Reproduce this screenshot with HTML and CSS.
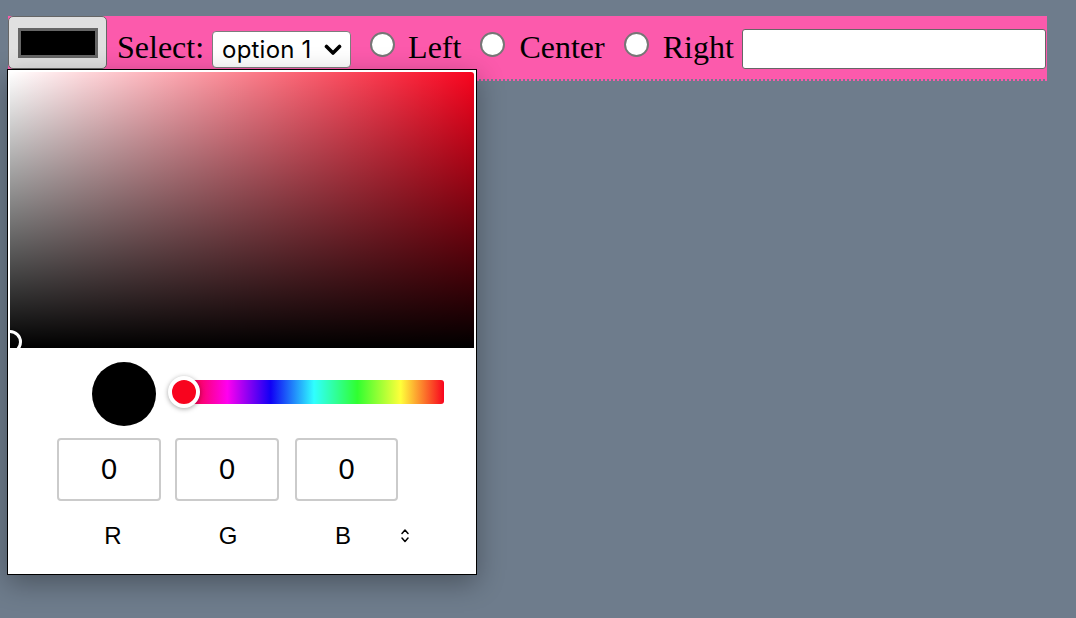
FILE: index.html
```html
<!DOCTYPE html>
<html lang="en">
<head>
<meta charset="utf-8">
<title>Toolbar with color picker</title>
<link rel="stylesheet" href="styles.css">
</head>
<body>
<div class="page">
  <form class="toolbar">
    <div class="color-field">
      <div class="color-btn"><span class="color-swatch"></span></div>
      <div class="picker">
        <div class="saturation">
          <span class="sat-pointer"></span>
        </div>
        <div class="picker-body">
          <div class="pk-row-top">
            <span class="pk-swatch"></span>
            <div class="hue">
              <span class="hue-thumb"></span>
            </div>
          </div>
          <div class="pk-fields">
            <div class="pk-field f-r">0</div>
            <div class="pk-field f-g">0</div>
            <div class="pk-field f-b">0</div>
          </div>
          <div class="pk-labels">
            <span class="pk-label l-r">R</span>
            <span class="pk-label l-g">G</span>
            <span class="pk-label l-b">B</span>
            <svg class="pk-toggle" width="8" height="16" viewBox="0 0 8 16">
              <path d="M1 5.5 L4 2 L7 5.5" fill="none" stroke="#000" stroke-width="1.5" stroke-linecap="round" stroke-linejoin="round"/>
              <path d="M1 10 L4 13.5 L7 10" fill="none" stroke="#000" stroke-width="1.5" stroke-linecap="round" stroke-linejoin="round"/>
            </svg>
          </div>
        </div>
      </div>
    </div>
    <span class="lbl lbl-select">Select:</span>
    <div class="select">
      <span class="select-text">option 1</span>
      <svg class="select-chev" width="18" height="12" viewBox="0 0 18 12">
        <path d="M2.5 2.5 L9 9 L15.5 2.5" fill="none" stroke="#000" stroke-width="3.6" stroke-linecap="round" stroke-linejoin="round"/>
      </svg>
    </div>
    <input type="radio" name="align" class="radio r-left">
    <span class="lbl lbl-left">Left</span>
    <input type="radio" name="align" class="radio r-center">
    <span class="lbl lbl-center">Center</span>
    <input type="radio" name="align" class="radio r-right">
    <span class="lbl lbl-right">Right</span>
    <input type="text" class="text-input">
  </form>
</div>
</body>
</html>
```

FILE: styles.css
```css
html, body {
  margin: 0;
  padding: 0;
  height: 100%;
  background: #6e7c8c;
}

.page {
  box-sizing: border-box;
  min-height: 100%;
  padding: 16px 8px 0 8px;
}

.toolbar {
  position: relative;
  display: flex;
  align-items: flex-start;
  width: fit-content;
  height: 63px;
  margin: 0;
  padding: 0 1px 0 0;
  background: #fc5aac;
  background-clip: padding-box;
  border-bottom: 2px dotted #fc5aac;
  font-family: "Liberation Serif", "Times New Roman", serif;
  overflow: visible;
}

/* color input */
.color-field {
  position: relative;
  margin-right: 10px;
  overflow: visible;
}

.color-btn {
  box-sizing: border-box;
  width: 99px;
  height: 53px;
  padding: 11px 9px;
  background: #e0e0e0;
  border: 1.5px solid #666;
  border-radius: 5px;
}

.color-swatch {
  display: block;
  box-sizing: border-box;
  width: 80px;
  height: 30px;
  background: #000;
  border: 3px solid #666;
}

/* labels */
.lbl {
  font-size: 32px;
  line-height: 36px;
  color: #000;
  margin-top: 13px;
  white-space: nowrap;
}

.lbl-select { margin-right: 8px; }
.lbl-left { margin-right: 19px; }
.lbl-center { margin-right: 19px; }
.lbl-right { margin-right: 8px; }

/* select */
.select {
  box-sizing: border-box;
  display: flex;
  align-items: center;
  width: 139px;
  height: 37px;
  margin-top: 15px;
  margin-right: 19px;
  padding: 0 0 0 9px;
  background: #fff;
  border: 1px solid #7d7d7d;
  border-radius: 4px;
}

.select-text {
  font-family: "Inter", "Liberation Sans", Arial, sans-serif;
  font-size: 24px;
  line-height: 30px;
  color: #000;
  letter-spacing: 0.2px;
}

.select-chev {
  margin-left: auto;
  margin-right: 8px;
}

/* radios */
.radio {
  appearance: none;
  -webkit-appearance: none;
  box-sizing: border-box;
  width: 25px;
  height: 25px;
  margin: 16px 13px 0 0;
  background: #fff;
  border: 2px solid #767676;
  border-radius: 50%;
}

.r-center, .r-right { margin-right: 14px; }

/* text input */
.text-input {
  box-sizing: border-box;
  width: 304px;
  height: 40px;
  margin: 13px 0 0 0;
  background: #fff;
  border: 1.5px solid #666;
  border-radius: 3px;
}

/* picker popover */
.picker {
  position: absolute;
  left: -1px;
  top: 53px;
  z-index: 5;
  box-sizing: border-box;
  width: 470px;
  height: 506px;
  background: #fff;
  border: 1px solid #000;
  box-shadow: 0 8px 26px rgba(0, 0, 0, 0.32);
  font-family: "Liberation Sans", Arial, sans-serif;
}

.saturation {
  position: relative;
  overflow: hidden;
  height: 276px;
  margin: 2px 2px 0 2px;
  border-radius: 3px 3px 0 0;
  background:
    linear-gradient(to top, #000 0%, rgba(0, 0, 0, 0) 100%),
    linear-gradient(to right, #fff 0%, rgba(255, 255, 255, 0) 100%),
    #f8041e;
}

.sat-pointer {
  position: absolute;
  left: -12px;
  top: 258px;
  box-sizing: border-box;
  width: 24px;
  height: 24px;
  border: 3px solid #fff;
  border-radius: 50%;
  box-shadow: 0 0 3px rgba(0, 0, 0, 0.6);
}

.picker-body {
  height: 226px;
}

.pk-row-top {
  display: flex;
  align-items: flex-start;
  padding: 14px 0 0 84px;
}

.pk-swatch {
  display: block;
  width: 64px;
  height: 64px;
  border-radius: 50%;
  background: #000;
}

.hue {
  position: relative;
  width: 260px;
  height: 24px;
  margin: 18px 0 0 28px;
  border-radius: 3px;
  background: linear-gradient(to right,
    #f8041e 0%,
    #ff00f0 16.67%,
    #1000f5 33.33%,
    #30ffff 50%,
    #30ff30 66.67%,
    #ffff3a 83.33%,
    #f8041e 100%);
}

.hue-thumb {
  position: absolute;
  left: -16px;
  top: -4px;
  box-sizing: border-box;
  width: 32px;
  height: 32px;
  border-radius: 50%;
  background: #f8041e;
  border: 4px solid #fff;
  box-shadow: 0 1px 5px rgba(0, 0, 0, 0.35);
}

.pk-fields {
  display: flex;
  margin-top: 12px;
  padding-left: 49px;
}

.pk-field {
  box-sizing: border-box;
  display: flex;
  align-items: center;
  justify-content: center;
  width: 104px;
  height: 63px;
  border: 2px solid #cbcbcb;
  border-radius: 4px;
  font-size: 29px;
  color: #000;
}

.f-g { margin-left: 14px; }
.f-b { margin-left: 16px; width: 103px; }

.pk-labels {
  display: flex;
  align-items: flex-start;
  margin-top: 23px;
  padding-left: 49px;
}

.pk-label {
  display: block;
  text-align: center;
  font-size: 24px;
  line-height: 24px;
  color: #000;
}

.l-r { width: 112px; }
.l-g { width: 118px; }
.l-b { width: 112px; }

.pk-toggle {
  display: block;
  margin: 4px 0 0 2px;
}
```
